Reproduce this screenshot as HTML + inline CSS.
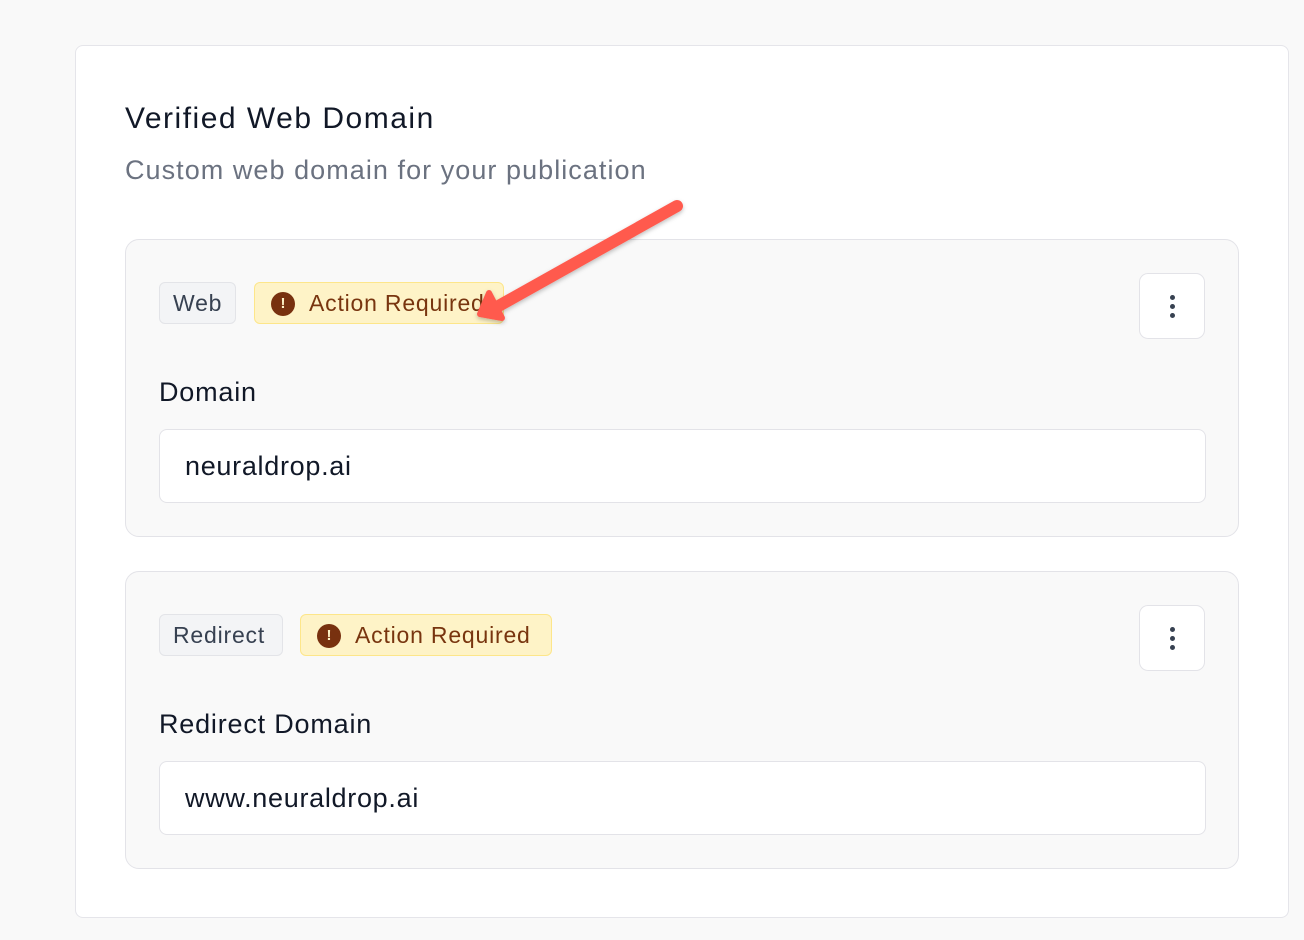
<!DOCTYPE html>
<html><head><style>
body{margin:0;width:1304px;height:940px;background:#f9f9f9;font-family:"Liberation Sans",sans-serif;position:relative;overflow:hidden}
.card{position:absolute;left:75px;top:45px;width:1212px;height:871px;background:#fff;border:1px solid #e5e5ea;border-radius:8px}
.abs{position:absolute}
h1{position:absolute;left:125px;top:102px;margin:0;font-size:30px;font-weight:normal;color:#111827;letter-spacing:1.5px}
.sub{left:125px;top:155px;font-size:27px;color:#6b7280;letter-spacing:1.05px}
.box{position:absolute;left:125px;width:1112px;height:296px;background:#f9f9f9;border:1px solid #e3e3e8;border-radius:14px}
.tag{position:absolute;height:42px;line-height:40px;border-radius:6px;font-size:23px;box-sizing:border-box;letter-spacing:0.8px}
.gray{background:#f3f4f6;border:1px solid #e3e4e8;color:#374151;padding:0 13px}
.yel{background:#fef3c7;border:1px solid #fde68a;color:#78350f;padding:0 0 0 54px}
.ic{position:absolute;left:16px;top:9px;width:24px;height:24px;border-radius:50%;background:#78310f;color:#fef3c7;font-size:15px;line-height:24px;text-align:center;font-weight:bold;letter-spacing:0}
.menu{position:absolute;left:1013px;top:33px;width:66px;height:66px;background:#fff;border:1px solid #e3e3e8;border-radius:9px;box-sizing:border-box}
.dot{position:absolute;left:30px;width:5px;height:5px;border-radius:50%;background:#374151}
.lab{position:absolute;left:33px;top:137px;font-size:27px;color:#111827;letter-spacing:0.8px}
.inp{position:absolute;left:33px;top:189px;width:1047px;height:74px;background:#fff;border:1px solid #e3e3e8;border-radius:8px;font-size:27px;color:#111827;line-height:72px;padding-left:25px;box-sizing:border-box;letter-spacing:0.7px}
</style></head><body>
<div class="card"></div>
<h1>Verified Web Domain</h1>
<div class="abs sub">Custom web domain for your publication</div>
<div class="box" style="top:239px">
 <div class="tag gray" style="left:33px;top:42px">Web</div>
 <div class="tag yel" style="left:128px;top:42px;width:250px"><div class="ic">!</div>Action Required</div>
 <div class="menu"><div class="dot" style="top:21px"></div><div class="dot" style="top:30px"></div><div class="dot" style="top:39px"></div></div>
 <div class="lab">Domain</div>
 <div class="inp">neuraldrop.ai</div>
</div>
<div class="box" style="top:571px">
 <div class="tag gray" style="left:33px;top:42px;width:124px">Redirect</div>
 <div class="tag yel" style="left:174px;top:42px;width:252px"><div class="ic">!</div>Action Required</div>
 <div class="menu"><div class="dot" style="top:21px"></div><div class="dot" style="top:30px"></div><div class="dot" style="top:39px"></div></div>
 <div class="lab">Redirect Domain</div>
 <div class="inp">www.neuraldrop.ai</div>
</div>
<svg class="abs" style="left:0;top:0" width="1304" height="940">
<defs><filter id="s"><feDropShadow dx="0" dy="2" stdDeviation="2" flood-opacity="0.25"/></filter></defs>
<g filter="url(#s)" stroke="#ff5a4e" stroke-linecap="round" stroke-linejoin="round" fill="#ff5a4e">
<line x1="677" y1="206" x2="495" y2="308" stroke-width="12"/>
<polygon points="480,314 489,293 502,318" stroke-width="6"/>
</g>
</svg>
</body></html>
